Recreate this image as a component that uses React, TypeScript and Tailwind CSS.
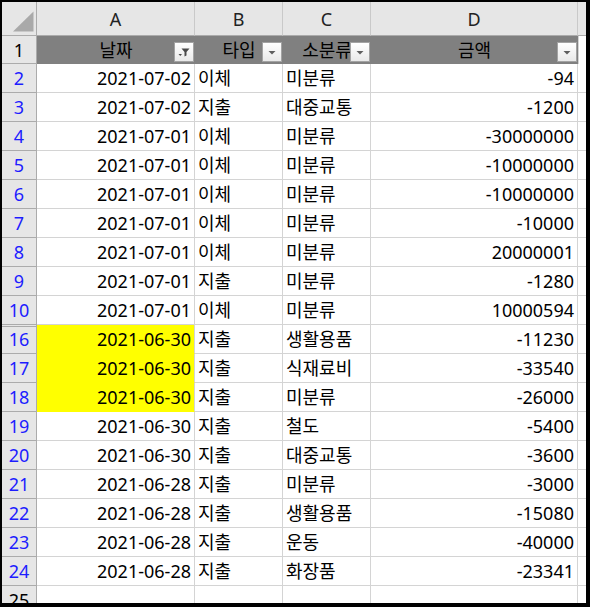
import React from "react";

type Row = { n: number; date?: string; type?: string; cat?: string; amt?: string; yellow?: boolean };

const rows: Row[] = [
  { n: 2, date: "2021-07-02", type: "이체", cat: "미분류", amt: "-94" },
  { n: 3, date: "2021-07-02", type: "지출", cat: "대중교통", amt: "-1200" },
  { n: 4, date: "2021-07-01", type: "이체", cat: "미분류", amt: "-30000000" },
  { n: 5, date: "2021-07-01", type: "이체", cat: "미분류", amt: "-10000000" },
  { n: 6, date: "2021-07-01", type: "이체", cat: "미분류", amt: "-10000000" },
  { n: 7, date: "2021-07-01", type: "이체", cat: "미분류", amt: "-10000" },
  { n: 8, date: "2021-07-01", type: "이체", cat: "미분류", amt: "20000001" },
  { n: 9, date: "2021-07-01", type: "지출", cat: "미분류", amt: "-1280" },
  { n: 10, date: "2021-07-01", type: "이체", cat: "미분류", amt: "10000594" },
  { n: 16, date: "2021-06-30", type: "지출", cat: "생활용품", amt: "-11230", yellow: true },
  { n: 17, date: "2021-06-30", type: "지출", cat: "식재료비", amt: "-33540", yellow: true },
  { n: 18, date: "2021-06-30", type: "지출", cat: "미분류", amt: "-26000", yellow: true },
  { n: 19, date: "2021-06-30", type: "지출", cat: "철도", amt: "-5400" },
  { n: 20, date: "2021-06-30", type: "지출", cat: "대중교통", amt: "-3600" },
  { n: 21, date: "2021-06-28", type: "지출", cat: "미분류", amt: "-3000" },
  { n: 22, date: "2021-06-28", type: "지출", cat: "생활용품", amt: "-15080" },
  { n: 23, date: "2021-06-28", type: "지출", cat: "운동", amt: "-40000" },
  { n: 24, date: "2021-06-28", type: "지출", cat: "화장품", amt: "-23341" },
  { n: 25 },
];

const cols = "grid grid-cols-[35px_158px_88px_88px_207px_8px]";

function DropButton({ filter }: { filter?: boolean }) {
  return (
    <div className="absolute right-[1px] bottom-[2px] w-[20px] h-[20px] border border-[#a3a3a3] bg-gradient-to-b from-white to-[#e9e9e9] box-border">
      <svg width="18" height="18" viewBox="0 0 18 18" className="block">
        {filter ? (
          <>
            <path d="M6.5 5.5 H14.5 L11.5 9 V12.5 L9.5 13.5 V9 Z" fill="#4a4a4a" />
            <path d="M3.5 11 H7 L5.25 13 Z" fill="#4a4a4a" />
          </>
        ) : (
          <path d="M5.5 8 H12.5 L9 11.5 Z" fill="#5e5e5e" />
        )}
      </svg>
    </div>
  );
}

export default function App() {
  const font = "font-['Noto_Sans','Noto_Sans_CJK_KR',sans-serif]";
  return (
    <div className={`w-[590px] h-[607px] overflow-hidden bg-white border-black border-t-2 border-l-2 border-r-4 border-b-4 box-border ${font} text-[18px] text-black`}>
      {/* Column headers */}
      <div className={`${cols} h-[34px] bg-[#e6e6e6]`}>
        <div className="relative border-r border-b border-[#ababab]">
          <svg width="34" height="33" className="absolute left-0 top-0">
            <path d="M11 29.5 L31.5 29.5 L31.5 9.5 Z" fill="#a9a9a9" />
          </svg>
        </div>
        {["A", "B", "C", "D"].map((c) => (
          <div key={c} className="flex items-center justify-center border-r border-b border-r-[#c9c9c9] border-b-[#ababab] text-[#222] leading-none pt-[1px]">
            {c}
          </div>
        ))}
        <div className="border-b border-[#ababab]" />
      </div>
      {/* Row 1: table header */}
      <div className={`${cols} h-[28px]`}>
        <div className="flex items-center justify-center bg-[#e6e6e6] border-r border-b border-[#ababab] leading-none">1</div>
        {["날짜", "타입", "소분류", "금액"].map((h, i) => (
          <div key={h} className="relative flex items-center justify-center bg-[#808080] leading-none pb-[1px]">
            {h}
            <DropButton filter={i === 0} />
          </div>
        ))}
        <div className="bg-white border-l border-[#d4d4d4]" />
      </div>
      {rows.map((r) => (
        <div key={r.n} className={`${cols} h-[29px]`}>
          <div
            className={`flex items-center justify-center bg-[#e6e6e6] border-r border-b border-[#ababab] leading-none ${
              r.n === 25 ? "text-black" : "text-[#1d1dff]"
            } ${r.n === 16 ? "shadow-[inset_0_1px_0_#e6e6e6,inset_0_2px_0_#ababab]" : ""}`}
          >
            {r.n}
          </div>
          <div
            className={`flex items-center justify-end pr-[3px] border-r border-b leading-none ${
              r.yellow ? "bg-[#ffff00] border-b-[#ffff00] border-r-[#d4d4d4]" : "border-[#d4d4d4]"
            }`}
          >
            {r.date}
          </div>
          <div className="flex items-center pl-[3px] border-r border-b border-[#d4d4d4] leading-none">{r.type}</div>
          <div className="flex items-center pl-[3px] border-r border-b border-[#d4d4d4] leading-none">{r.cat}</div>
          <div className="flex items-center justify-end pr-[3px] border-r border-b border-[#d4d4d4] leading-none">{r.amt}</div>
          <div className="border-b border-[#d4d4d4]" />
        </div>
      ))}
    </div>
  );
}
